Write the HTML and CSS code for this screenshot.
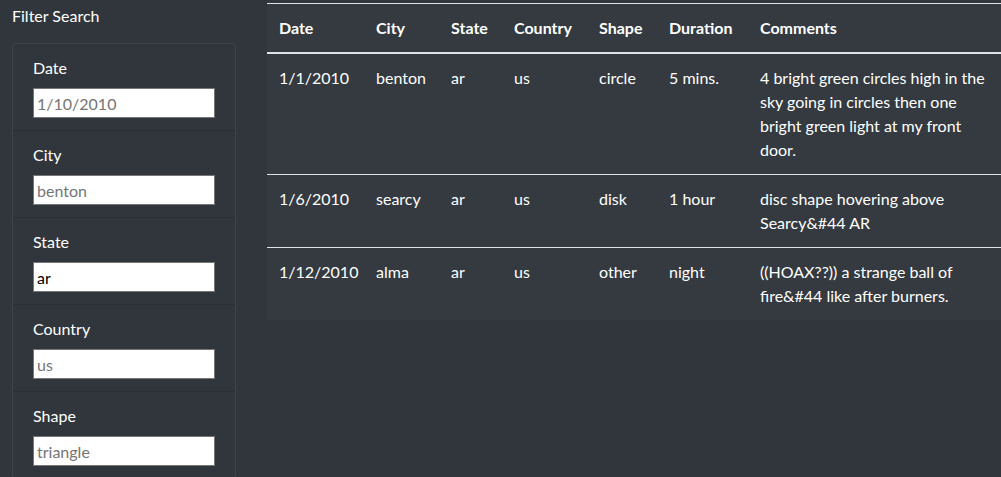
FILE: index.html
```html
<!DOCTYPE html>
<html lang="en">
<head>
<meta charset="utf-8">
<title>UFO Sightings</title>
<link rel="stylesheet" href="styles.css">
</head>
<body>
<div class="layout">
  <aside class="sidebar">
    <div class="sidebar-title">Filter Search</div>
    <ul class="filters">
      <li class="filter"><label class="filter-label" for="date">Date</label><input class="filter-input" id="date" type="text" placeholder="1/10/2010"></li>
      <li class="filter"><label class="filter-label" for="city">City</label><input class="filter-input" id="city" type="text" placeholder="benton"></li>
      <li class="filter"><label class="filter-label" for="state">State</label><input class="filter-input" id="state" type="text" value="ar" placeholder="ar"></li>
      <li class="filter"><label class="filter-label" for="country">Country</label><input class="filter-input" id="country" type="text" placeholder="us"></li>
      <li class="filter"><label class="filter-label" for="shape">Shape</label><input class="filter-input" id="shape" type="text" placeholder="triangle"></li>
    </ul>
  </aside>
  <main class="content">
    <table class="ufo-table">
      <colgroup>
        <col class="c-date"><col class="c-city"><col class="c-state"><col class="c-country"><col class="c-shape"><col class="c-duration"><col class="c-comments">
      </colgroup>
      <thead>
        <tr><th>Date</th><th>City</th><th>State</th><th>Country</th><th>Shape</th><th>Duration</th><th>Comments</th></tr>
      </thead>
      <tbody>
        <tr><td>1/1/2010</td><td>benton</td><td>ar</td><td>us</td><td>circle</td><td>5 mins.</td><td>4 bright green circles high in the sky going in circles then one bright green light at my front door.</td></tr>
        <tr><td>1/6/2010</td><td>searcy</td><td>ar</td><td>us</td><td>disk</td><td>1 hour</td><td>disc shape hovering above Searcy&amp;#44 AR</td></tr>
        <tr><td>1/12/2010</td><td>alma</td><td>ar</td><td>us</td><td>other</td><td>night</td><td>((HOAX??)) a strange ball of fire&amp;#44 like after burners.</td></tr>
      </tbody>
    </table>
  </main>
</div>
</body>
</html>
```

FILE: styles.css
```css
html, body {
  margin: 0;
  padding: 0;
}
body {
  background: #30363c;
  color: #ffffff;
  font-family: Lato, "Open Sans", "Liberation Sans", sans-serif;
  font-size: 16px;
  line-height: 24px;
  overflow: hidden;
}
.layout {
  display: flex;
  align-items: flex-start;
}
.sidebar {
  flex: 0 0 267px;
  box-sizing: border-box;
  padding-left: 12px;
}
.sidebar-title {
  margin-top: 4px;
  height: 24px;
}
.filters {
  list-style: none;
  margin: 15px 0 0 0;
  padding: 0;
  width: 224px;
  box-sizing: border-box;
  border: 1px solid #3d434a;
  border-radius: 4px;
}
.filter {
  display: flex;
  flex-direction: column;
  align-items: flex-start;
  padding: 12px 20px;
  border-top: 1px solid #2b3036;
}
.filter:first-child {
  border-top: 0;
}
.filter-label {
  margin-bottom: 8px;
}
.filter-input {
  box-sizing: border-box;
  width: 182px;
  height: 30px;
  margin: 0;
  padding: 0 3px;
  border: 1px solid #767676;
  background: #ffffff;
  color: #000000;
  font-family: inherit;
  font-size: 16px;
}
.filter-input::placeholder {
  color: #757575;
}
.content {
  flex: 1 1 auto;
  padding-top: 3px;
  min-width: 0;
}
.ufo-table {
  width: 735px;
  table-layout: fixed;
  border-collapse: collapse;
  background: #343a40;
  color: #ffffff;
}
.c-date { width: 97px; }
.c-city { width: 75px; }
.c-state { width: 63px; }
.c-country { width: 85px; }
.c-shape { width: 70px; }
.c-duration { width: 91px; }
.c-comments { width: 254px; }
.ufo-table th,
.ufo-table td {
  padding: 12px;
  text-align: left;
  vertical-align: top;
  border-top: 1px solid #dee2e6;
}
.ufo-table th {
  font-weight: 700;
  vertical-align: bottom;
  border-bottom: 2px solid #dee2e6;
}
```
